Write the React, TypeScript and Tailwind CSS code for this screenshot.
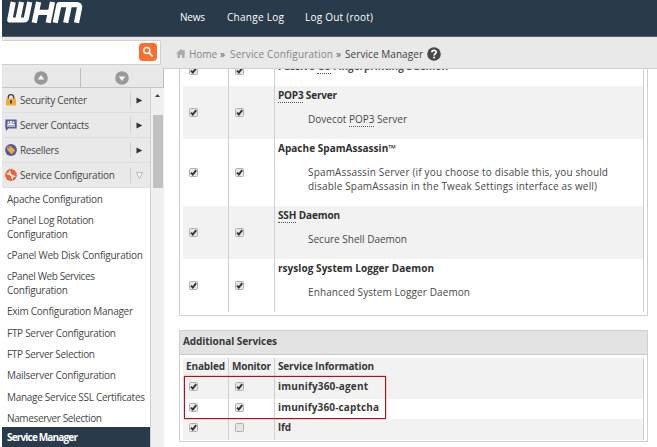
import { useLayoutEffect, useRef, useState, type ReactNode } from "react";

/** Single line of text tracked out to a given width. */
function Line({ w, className = "", children }: { w: number; className?: string; children: ReactNode }) {
  const ref = useRef<HTMLSpanElement>(null);
  const [spacing, setSpacing] = useState(0);
  useLayoutEffect(() => {
    const el = ref.current;
    if (!el) return;
    const count = (el.textContent ?? "").length;
    setSpacing((w - el.getBoundingClientRect().width) / Math.max(count - 1, 1));
  }, [w]);
  return (
    <span ref={ref} className={`inline-block whitespace-nowrap ${className}`} style={{ letterSpacing: spacing }}>
      {children}
    </span>
  );
}

function Check({ on = true }: { on?: boolean }) {
  return (
    <svg viewBox="0 0 9 9" className="block h-[9px] w-[9px] shrink-0">
      <rect x=".5" y=".5" width="8" height="8" rx="1" fill="#e7e7e7" stroke="#b0b0b0" />
      {on && <path d="M2 4.6 3.8 6.5 7.2 2.2" fill="none" stroke="#333" strokeWidth="1.9" />}
    </svg>
  );
}

const Abbr = ({ children }: { children: ReactNode }) => (
  <span className="border-b border-dotted border-[#555]">{children}</span>
);

type Service = {
  height: string;
  shaded?: boolean;
  title: ReactNode;
  titleWidth: number;
  lines: { text: ReactNode; w: number }[];
};

const services: Service[] = [
  {
    height: "h-[53px]",
    shaded: true,
    title: <><Abbr>POP3</Abbr> Server</>,
    titleWidth: 59,
    lines: [{ text: <>Dovecot <Abbr>POP3</Abbr> Server</>, w: 99 }],
  },
  {
    height: "h-[67px]",
    title: "Apache SpamAssassin™",
    titleWidth: 118,
    lines: [
      { text: "SpamAssassin Server (if you choose to disable this, you should", w: 300 },
      { text: "disable SpamAssasin in the Tweak Settings interface as well)", w: 289 },
    ],
  },
  {
    height: "h-[53px]",
    shaded: true,
    title: <><Abbr>SSH</Abbr> Daemon</>,
    titleWidth: 62,
    lines: [{ text: "Secure Shell Daemon", w: 99 }],
  },
  {
    height: "h-[53px]",
    title: "rsyslog System Logger Daemon",
    titleWidth: 156,
    lines: [{ text: "Enhanced System Logger Daemon", w: 162 }],
  },
];

function ServiceRow({ s }: { s: Service }) {
  return (
    <div className={`flex ${s.height} ${s.shaded ? "bg-[#f2f2f2]" : "bg-white"}`}>
      <div className="flex w-[46px] items-center border-r border-[#d0d0d0] pb-[1px] pl-[6px]"><Check /></div>
      <div className="flex w-[46px] items-center border-r border-[#d0d0d0] pb-[1px] pl-[6px]"><Check /></div>
      <div className="flex-1 pl-[3px] pt-[2px] leading-[14px]">
        <div className="h-[14px] font-bold text-[#303030]"><Line w={s.titleWidth}>{s.title}</Line></div>
        <div className="pl-[30px] pt-[10px]">
          {s.lines.map((l, i) => (
            <div key={i} className="h-[14px]"><Line w={l.w}>{l.text}</Line></div>
          ))}
        </div>
      </div>
    </div>
  );
}

function MenuIcon({ kind }: { kind: string }) {
  return (
    <svg viewBox="0 0 12 12" className="h-[12px] w-[12px] shrink-0">
      {kind === "lock" && (
        <>
          <path d="M3.3 5.5V3.3a2.7 2.7 0 0 1 5.4 0v2.2" fill="none" stroke="#4b4b4b" strokeWidth="1.5" />
          <rect x="1" y="4.6" width="10" height="7" rx=".7" fill="#f3ae35" />
          <circle cx="6" cy="7.4" r="1.1" fill="#333" />
          <path d="M5.4 7.5h1.2v2.3H5.4z" fill="#333" />
        </>
      )}
      {kind === "contacts" && (
        <>
          <path d="M.3 .6h11.4v9H3.5L.9 11.9V9.6H.3z" fill="#56609b" />
          <g fill="#fff">
            <circle cx="3.5" cy="3.3" r="1" /><circle cx="6" cy="2.8" r="1.1" /><circle cx="8.5" cy="3.3" r="1" />
            <path d="M2.4 6V4.8h1.9v-.6h3.4v.6h1.9V6zM2 6.6h8v.9H2z" />
          </g>
        </>
      )}
      {kind === "resellers" && (
        <>
          <circle cx="6" cy="6" r="5.9" fill="#535c91" />
          <path d="M2.2 2.5 6 2.2l4.2 4.4-3.5 3.6-4.3-4.1z" fill="#f2aa3d" />
          <circle cx="3.7" cy="3.8" r=".7" fill="#535c91" />
        </>
      )}
      {kind === "config" && (
        <>
          <circle cx="6" cy="6" r="5.9" fill="#ee6035" />
          <path d="M3.6 3.8 8.4 8.4" stroke="#fff" strokeWidth="1.9" />
          <path d="M4.1 1.4a2.3 2.3 0 0 1 1 3.4 2.3 2.3 0 0 1-3.8-.6l1.9.1 .9-1zM7.9 10.7a2.3 2.3 0 0 1-1-3.4 2.3 2.3 0 0 1 3.8.6l-1.9-.1-.9 1z" fill="#fff" />
        </>
      )}
    </svg>
  );
}

const categories = [
  { icon: "lock", name: "Security Center", w: 67, open: false },
  { icon: "contacts", name: "Server Contacts", w: 69, open: false },
  { icon: "resellers", name: "Resellers", w: 39, open: false },
  { icon: "config", name: "Service Configuration", w: 95, open: true },
];

const pages: { name: string; w: number }[][] = [
  [{ name: "Apache Configuration", w: 96 }],
  [{ name: "cPanel Log Rotation", w: 87 }, { name: "Configuration", w: 61 }],
  [{ name: "cPanel Web Disk Configuration", w: 136 }],
  [{ name: "cPanel Web Services", w: 88 }, { name: "Configuration", w: 61 }],
  [{ name: "Exim Configuration Manager", w: 126 }],
  [{ name: "FTP Server Configuration", w: 109 }],
  [{ name: "FTP Server Selection", w: 88 }],
  [{ name: "Mailserver Configuration", w: 109 }],
  [{ name: "Manage Service SSL Certificates", w: 138 }],
  [{ name: "Nameserver Selection", w: 95 }],
];

function Sidebar() {
  return (
    <aside className="w-[162px] shrink-0">
      <div className="flex h-[20px] border-b border-[#c4c4c4] bg-[#e8e8e8]">
        {[false, true].map((down) => (
          <div key={String(down)} className={`flex items-center justify-center border-r border-[#bcbcbc] ${down ? "w-[83px]" : "w-[79px]"}`}>
            <svg viewBox="0 0 14 14" className="h-[14px] w-[14px]">
              <circle cx="7" cy="7" r="6.8" fill="#999" />
              <path d={down ? "M3.7 5.6h6.6L7 10z" : "M3.7 8.4h6.6L7 4z"} fill="#f5f5f5" />
            </svg>
          </div>
        ))}
      </div>
      <div className="flex h-[359px]">
        <div className="w-[148px]">
          {categories.map((c) => (
            <div key={c.name} className="flex h-[25px] items-center border-b border-[#dedede] bg-[#e9e9e9] pl-[3px]">
              <MenuIcon kind={c.icon} />
              <div className="w-[113px] pl-[3px] text-[#484848]"><Line w={c.w}>{c.name}</Line></div>
              <div className="flex h-[16px] items-center border-l border-[#d0d0d0] pl-[5px]">
                <svg viewBox="0 0 7 7" className="h-[7px] w-[7px]">
                  {c.open ? (
                    <path d="M.5 .6h6L3.5 6.6z" fill="#fff" stroke="#a5a5a5" strokeWidth=".8" />
                  ) : (
                    <path d="M.5.5 6.3 3.5.5 6.5z" fill="#333" />
                  )}
                </svg>
              </div>
            </div>
          ))}
          <nav className="flex h-[239px] flex-col gap-[7.5px] pl-[5px] pt-[4.6px] leading-[13.8px] text-[#484848]">
            {pages.map((p, i) => (
              <div key={i}>
                {p.map((l) => (
                  <div key={l.name} className="h-[13.8px]"><Line w={l.w}>{l.name}</Line></div>
                ))}
              </div>
            ))}
          </nav>
          <div className="h-[24px] bg-[#293a4a] pl-[5px] font-bold leading-[21px] text-white">
            <Line w={71}>Service Manager</Line>
          </div>
        </div>
        <div className="flex w-[14px] flex-col items-center border-l border-[#cfcfcf] bg-[#f0f0f0]">
          <svg viewBox="0 0 5 3" className="mt-[6px] h-[3px] w-[5px]"><path d="M0 3 2.5 0 5 3z" fill="#444" /></svg>
          <div className="mt-[18px] h-[73px] w-[10px] bg-[#c1c1c1]" />
        </div>
      </div>
    </aside>
  );
}

const extras = [
  { name: "imunify360-agent", w: 90, monitor: true, shaded: true },
  { name: "imunify360-captcha", w: 101, monitor: true, shaded: false },
  { name: "lfd", w: 13, monitor: false, shaded: true },
];

function AdditionalServices() {
  return (
    <section className="relative mt-[14px] h-[112px] border border-[#d0d0d0] bg-white font-bold text-[#383838]">
      <div className="h-[24px] border-b border-[#c8c8c8] bg-[#e3e3e3] pl-[3px] leading-[21px]">
        <Line w={94}>Additional Services</Line>
      </div>
      <div className="ml-[3px] mr-[3px] mt-[3px] border-r border-[#d0d0d0]">
        <div className="flex h-[20px] bg-[#f2f2f2] leading-[17px]">
          <div className="w-[46px] border-r border-[#d0d0d0] pl-[3px]"><Line w={39}>Enabled</Line></div>
          <div className="w-[46px] border-r border-[#d0d0d0] pl-[3px]"><Line w={39}>Monitor</Line></div>
          <div className="pl-[3px]"><Line w={96}>Service Information</Line></div>
        </div>
        {extras.map((e) => (
          <div key={e.name} className={`flex h-[20.5px] leading-[17px] ${e.shaded ? "bg-[#f2f2f2]" : "bg-white"}`}>
            <div className="flex w-[46px] items-center border-r border-[#d0d0d0] pb-[3px] pl-[6px]"><Check /></div>
            <div className="flex w-[46px] items-center border-r border-[#d0d0d0] pb-[3px] pl-[6px]"><Check on={e.monitor} /></div>
            <div className="pl-[3px]"><Line w={e.w}>{e.name}</Line></div>
          </div>
        ))}
      </div>
      <div className="absolute left-[4px] top-[45px] h-[43px] w-[202px] border border-[#b01217] shadow-[0_0_1px_#c0282d]" />
    </section>
  );
}

export default function App() {
  return (
    <div className="h-[447px] w-[657px] overflow-hidden bg-white pl-[2px] font-['Open_Sans','Noto_Sans',sans-serif] text-[10px] text-[#484848]">
      <header className="flex h-[37px] border-b border-[#536170] bg-[#293a4a] text-white">
        <svg viewBox="0 0 80 24" className="ml-[3px] h-[24px] w-[80px]" fill="none" stroke="#fff" strokeWidth="5.2" strokeLinejoin="round">
          <path d="M8.2 2 4.8 20H18.8Q21 20 21.4 18L24.7 2M16.5 2 12.8 20" />
          <path d="M33.6 2 29.2 22.7M47.5 2 43.2 22.7M30 12.4H45" />
          <path d="M50.2 22.7 54 4.6H71.5Q75.3 4.6 74.5 8L71.5 22.7M64.5 4.6 60.7 22.7" />
        </svg>
        <nav className="ml-[95px] flex pt-[10px] font-medium leading-[14px]">
          <div className="w-[47px]"><Line w={25}>News</Line></div>
          <div className="w-[78px]"><Line w={57}>Change Log</Line></div>
          <Line w={68}>Log Out (root)</Line>
        </nav>
      </header>
      <div className="flex h-[32px] border-b border-[#d2d2d2] bg-[#e9e9e9]">
        <div className="mt-[3px] flex h-[25px] w-[159px] items-center justify-end rounded-r-[2px] border border-l-0 border-[#d0d0d0] bg-white pb-[2px] pr-[3px]">
          <div className="flex h-[18px] w-[18px] items-center justify-center rounded-[4px] bg-[#ff6c2c]">
            <svg viewBox="0 0 12 12" className="h-[12px] w-[12px]" fill="none" stroke="#fff">
              <circle cx="4.8" cy="4.5" r="3" strokeWidth="1.5" />
              <path d="m7.1 6.9 3.7 3.7" strokeWidth="2" />
            </svg>
          </div>
        </div>
        <div className="flex h-[34px] items-center pl-[15px] leading-[14px] text-[#858585]">
          <svg viewBox="0 0 10 9" className="mb-[2px] mr-[3px] h-[9px] w-[10px]">
            <path d="M5 0 0 4.5h1.5V9H4V6h2v3h2.5V4.5H10L8.6 3.2V.7H7.2v1.2z" fill="#aaa" />
          </svg>
          <div className="w-[31px]"><Line w={28}>Home</Line></div>
          <div className="w-[10px] text-[#555]">»</div>
          <div className="w-[106px]"><Line w={103}>Service Configuration</Line></div>
          <div className="w-[9px] text-[#555]">»</div>
          <div className="w-[82px] text-[#404040]"><Line w={78}>Service Manager</Line></div>
          <svg viewBox="0 0 14 14" className="h-[14px] w-[14px]">
            <circle cx="7" cy="7" r="6.8" fill="#484848" />
            <path d="M4.8 5.3C4.9 2.7 9.2 2.7 9.2 5.3 9.2 6.8 7.1 6.8 7.1 8.6" fill="none" stroke="#fff" strokeWidth="1.7" />
            <circle cx="7.1" cy="10.6" r="1" fill="#fff" />
          </svg>
        </div>
      </div>
      <div className="-mt-px flex h-[379px]">
        <Sidebar />
        <main className="ml-[15px] w-[469px]">
          <section className="mt-px h-[247px] border border-t-0 border-[#d0d0d0] pl-[3px] pr-[3px]">
            <div className="h-[243px] border-r border-[#d0d0d0]">
              <div className="flex h-[17px] overflow-hidden">
                <div className="w-[46px] border-r border-[#d0d0d0] pl-[6px]"><div className="-mt-[3px]"><Check /></div></div>
                <div className="w-[46px] border-r border-[#d0d0d0] pl-[6px]"><div className="-mt-[3px]"><Check /></div></div>
                <div className="h-[5px] overflow-hidden pl-[3px] font-bold leading-[14px]">
                  <div className="-mt-[10px]"><Line w={170}>Passive <Abbr>OS</Abbr> Fingerprinting Daemon</Line></div>
                </div>
              </div>
              {services.map((s, i) => <ServiceRow key={i} s={s} />)}
            </div>
          </section>
          <AdditionalServices />
        </main>
      </div>
    </div>
  );
}
